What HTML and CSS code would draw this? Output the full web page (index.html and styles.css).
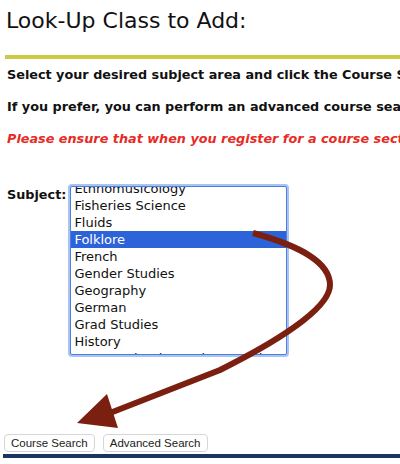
FILE: index.html
```html
<!DOCTYPE html>
<html lang="en">
<head>
    <meta charset="UTF-8">
    <title>Look-Up Class to Add</title>
    <link rel="stylesheet" href="styles.css">
</head>
<body>
    <h1 class="title">Look-Up Class to Add:</h1>
    <div class="rule"></div>
    <p class="info">Select your desired subject area and click the Course Search button.</p>
    <p class="info">If you prefer, you can perform an advanced course search instead.</p>
    <p class="info warn">Please ensure that when you register for a course section you check the details.</p>

    <form class="lookup">
        <div class="subject-row">
            <label class="subject-label">Subject:</label>
            <div class="listbox">
                <div class="list-inner">
                    <div class="opt">Ethnomusicology</div>
                    <div class="opt">Fisheries Science</div>
                    <div class="opt">Fluids</div>
                    <div class="opt selected">Folklore</div>
                    <div class="opt">French</div>
                    <div class="opt">Gender Studies</div>
                    <div class="opt">Geography</div>
                    <div class="opt">German</div>
                    <div class="opt">Grad Studies</div>
                    <div class="opt">History</div>
                    <div class="opt">Human Kinetics and Recreation</div>
                </div>
            </div>
        </div>
        <div class="buttons">
            <button type="button" class="btn">Course Search</button>
            <button type="button" class="btn">Advanced Search</button>
        </div>
    </form>
    <div class="footer-bar"></div>

    <!-- annotation arrow drawn over the page -->
    <svg class="arrow" width="400" height="464" viewBox="0 0 400 464">
        <path d="M253,233 C300,246 330,262 330,285 C330,310 270,345 220,370 L110,413" fill="none" stroke="#7b2011" stroke-width="6"/>
        <polygon points="77,423 107,394 118,428" fill="#7b2011"/>
    </svg>
</body>
</html>
```

FILE: styles.css
```css
html, body { margin: 0; padding: 0; overflow: hidden; background: #fff; }
body { font-family: "DejaVu Sans", Verdana, sans-serif; color: #111; width: 400px; height: 464px; position: relative; }
.title { font-size: 22px; font-weight: normal; margin: 0; padding: 7px 0 0 6px; line-height: 27px; }
.rule { height: 4px; background: #cccc44; margin: 21px 0 0 5px; }
.info { font-size: 12.8px; font-weight: bold; margin: 0; padding-left: 7px; white-space: nowrap; line-height: 15px; }
.rule + .info { margin-top: 8px; }
.info + .info { margin-top: 17px; }
.warn { color: #e62b25; font-style: italic; }
.lookup { margin-top: 40px; }
.subject-row { display: flex; align-items: flex-start; gap: 4px; padding-left: 7px; }
.subject-label { font-size: 12.8px; font-weight: bold; padding-top: 1px; }
.listbox { width: 215px; height: 167px; border: 1px solid #4a7fe0; box-shadow: 0 0 0 2px #a9c3f3; border-radius: 2px; overflow: hidden; background: #fff; }
.list-inner { margin-top: -7px; }
.opt { font-size: 13px; line-height: 17px; height: 17px; padding-left: 3px; white-space: nowrap; color: #111; }
.opt.selected { background: #2d63d8; color: #fff; }
.buttons { display: flex; gap: 8px; padding-left: 4px; margin-top: 79px; }
.btn { font-family: "Liberation Sans", Arial, sans-serif; font-size: 11.5px; color: #222; background: #fff; border: 1px solid #d6d6d6; border-radius: 4px; height: 18px; padding: 0 6px; line-height: 16px; }
.footer-bar { height: 4px; background: #1c3461; margin: 2px 0 0 3px; }
.arrow { position: absolute; left: 0; top: 0; pointer-events: none; }
```
